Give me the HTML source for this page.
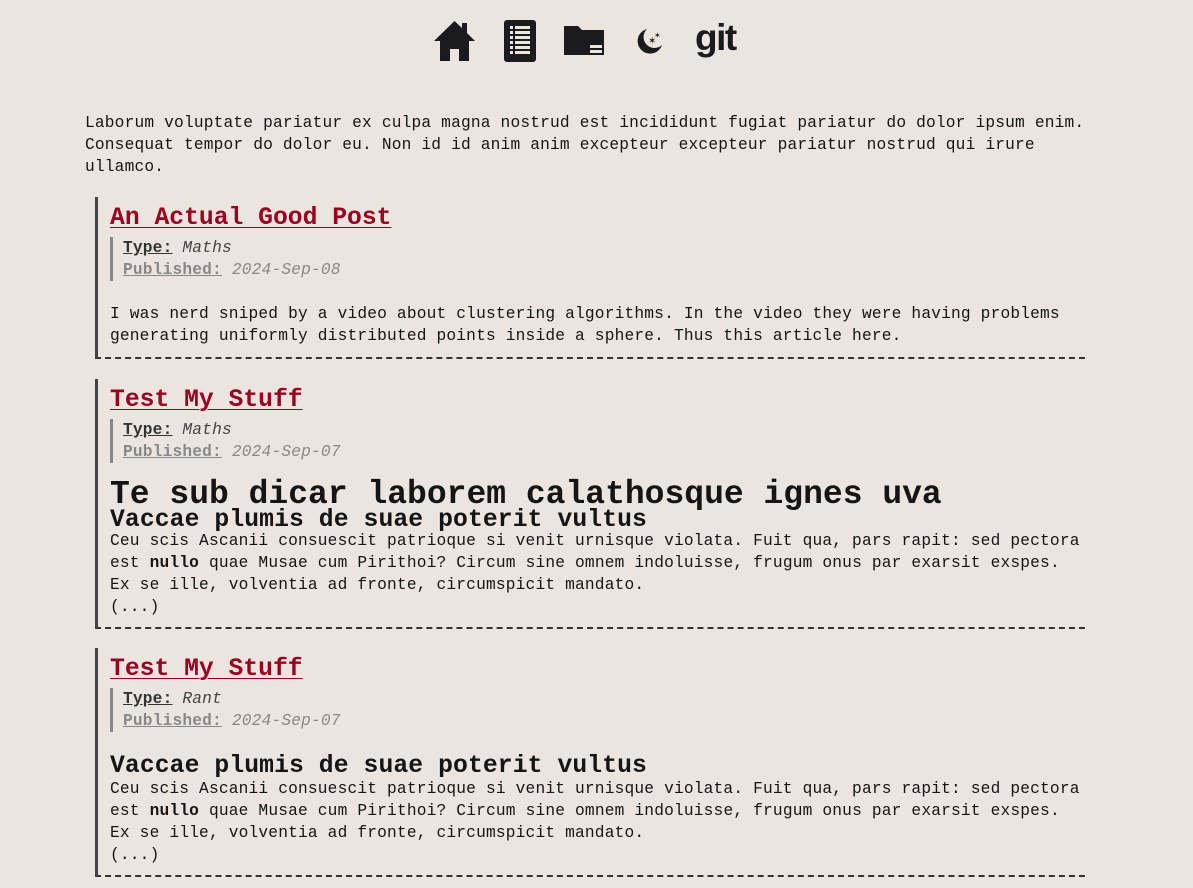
<!DOCTYPE html>
<html><head><meta charset="utf-8"><style>
body{margin:0;background:#ece5df;font-family:"Liberation Mono",monospace;font-size:16.2px;line-height:22px;color:#151515;}
.nav{height:85px;position:relative}
.nav svg{position:absolute}
.intro{position:absolute;left:85px;top:112px;white-space:nowrap;margin:0;letter-spacing:0.18px}
.art{position:absolute;left:95px;width:990px;border-left:3px solid #444;border-bottom:2px dashed #333;padding-left:12px;padding-top:3px;box-sizing:border-box;white-space:nowrap}
.art h3{margin:0;font-size:24.7px;line-height:30px;font-weight:bold;height:30px;padding-top:3px}
.art h3 a{color:#9b0021;text-decoration:underline;text-decoration-thickness:1px;text-underline-offset:3px}
.meta{margin-top:4px;border-left:3px solid #888;padding-left:10px;height:44px;letter-spacing:0.18px}
.meta b{text-decoration:underline;color:#333}
.meta i{color:#444}
.meta .p b{color:#888}.meta .p i{color:#888}
.art p{margin:0;letter-spacing:0.18px}
h1{margin:0;font-size:33px;line-height:28px;font-weight:bold}
h2{margin:0;font-size:24.7px;line-height:20px;font-weight:bold;letter-spacing:0.1px}
</style></head><body>
<div class="nav">
<svg style="left:434px;top:20px" width="41" height="42" viewBox="0 0 41 42"><path d="M20.5 1 L0 21 L6 21 L6 41 L16 41 L16 29 L25 29 L25 41 L35 41 L35 21 L41 21 L33 13 L33 3 L28 3 L28 8 Z" fill="#1a1a1f"/></svg>
<svg style="left:504px;top:20px" width="32" height="42" viewBox="0 0 32 42"><rect x="0" y="0" width="32" height="42" rx="3" fill="#1a1a1f"/><g fill="#ece5df"><rect x="6" y="6" width="3" height="3"/><rect x="6" y="11" width="3" height="3"/><rect x="6" y="16" width="3" height="3"/><rect x="6" y="21" width="3" height="3"/><rect x="6" y="26" width="3" height="3"/><rect x="6" y="31" width="3" height="3"/><rect x="11" y="6" width="15" height="3"/><rect x="11" y="11" width="15" height="3"/><rect x="11" y="16" width="15" height="3"/><rect x="11" y="21" width="15" height="3"/><rect x="11" y="26" width="15" height="3"/><rect x="11" y="31" width="15" height="3"/></g></svg>
<svg style="left:564px;top:26px" width="41" height="30" viewBox="0 0 41 30"><path d="M0 0 H14 L18 4 H40 V29 H0 Z" fill="#1a1a1f"/><rect x="26" y="19" width="12" height="3" fill="#ece5df"/><rect x="26" y="24" width="12" height="3" fill="#ece5df"/></svg>
<svg style="left:636px;top:28px" width="27" height="27" viewBox="0 0 27 27"><path d="M11 1 A12.5 12.5 0 1 0 26 17 A10 10 0 0 1 11 1 Z" fill="#1a1a1f"/><text x="12" y="16" font-size="10" fill="#1a1a1f" font-family="DejaVu Sans">✶</text><text x="18" y="10" font-size="8" fill="#1a1a1f" font-family="DejaVu Sans">✶</text></svg>
<div style="position:absolute;left:695px;top:17px;font-family:'Liberation Sans',sans-serif;font-weight:bold;font-size:37px;line-height:42px;letter-spacing:-1.5px;color:#1a1a1f">git</div>
</div>
<p class="intro">Laborum voluptate pariatur ex culpa magna nostrud est incididunt fugiat pariatur do dolor ipsum enim.<br>Consequat tempor do dolor eu. Non id id anim anim excepteur excepteur pariatur nostrud qui irure<br>ullamco.</p>

<div class="art" style="top:197px;height:162px">
<h3><a>An Actual Good Post</a></h3>
<div class="meta"><div><b>Type:</b> <i>Maths</i></div><div class="p"><b>Published:</b> <i>2024-Sep-08</i></div></div>
<p style="margin-top:22px">I was nerd sniped by a video about clustering algorithms. In the video they were having problems<br>generating uniformly distributed points inside a sphere. Thus this article here.</p>
</div>

<div class="art" style="top:379px;height:250px">
<h3><a>Test My Stuff</a></h3>
<div class="meta"><div><b>Type:</b> <i>Maths</i></div><div class="p"><b>Published:</b> <i>2024-Sep-07</i></div></div>
<h1 style="margin-top:18px">Te sub dicar laborem calathosque ignes uva</h1>
<h2 style="margin-top:1px">Vaccae plumis de suae poterit vultus</h2>
<p>Ceu scis Ascanii consuescit patrioque si venit urnisque violata. Fuit qua, pars rapit: sed pectora<br>est <b>nullo</b> quae Musae cum Pirithoi? Circum sine omnem indoluisse, frugum onus par exarsit exspes.<br>Ex se ille, volventia ad fronte, circumspicit mandato.</p>
<p>(...)</p>
</div>

<div class="art" style="top:648px;height:229px">
<h3><a>Test My Stuff</a></h3>
<div class="meta"><div><b>Type:</b> <i>Rant</i></div><div class="p"><b>Published:</b> <i>2024-Sep-07</i></div></div>
<h2 style="margin-top:24px">Vaccae plumis de suae poterit vultus</h2>
<p style="margin-top:2px">Ceu scis Ascanii consuescit patrioque si venit urnisque violata. Fuit qua, pars rapit: sed pectora<br>est <b>nullo</b> quae Musae cum Pirithoi? Circum sine omnem indoluisse, frugum onus par exarsit exspes.<br>Ex se ille, volventia ad fronte, circumspicit mandato.</p>
<p>(...)</p>
</div>
</body></html>
